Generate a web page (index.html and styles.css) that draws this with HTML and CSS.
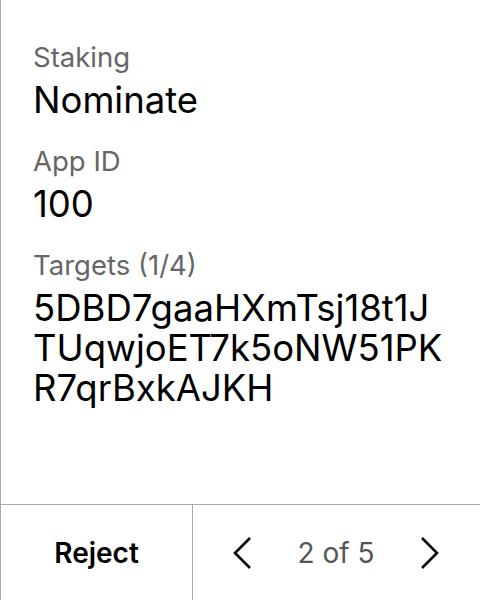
FILE: index.html
```html
<!DOCTYPE html>
<html>
<head>
<meta charset="utf-8">
<link rel="stylesheet" href="styles.css">
</head>
<body>
<div class="screen">
  <div class="content">
    <div class="field">
      <div class="label">Staking</div>
      <div class="value">Nominate</div>
    </div>
    <div class="field">
      <div class="label">App ID</div>
      <div class="value">100</div>
    </div>
    <div class="field">
      <div class="label">Targets (1/4)</div>
      <div class="value addr">5DBD7gaaHXmTsj18t1J<br>TUqwjoET7k5oNW51PK<br>R7qrBxkAJKH</div>
    </div>
  </div>
  <div class="footer">
    <div class="reject">Reject</div>
    <div class="pager">
      <svg class="chev" width="20" height="32" viewBox="0 0 20 32"><path d="M17 1 L2 16 L17 31" fill="none" stroke="#000" stroke-width="2.6"/></svg>
      <span class="count">2 of 5</span>
      <svg class="chev" width="20" height="32" viewBox="0 0 20 32"><path d="M3 1 L18 16 L3 31" fill="none" stroke="#000" stroke-width="2.6"/></svg>
    </div>
  </div>
</div>
</body>
</html>
```
FILE: styles.css
```css
html, body {
  margin: 0;
  padding: 0;
  background: #fff;
}
.screen {
  width: 480px;
  height: 600px;
  box-sizing: border-box;
  border-left: 1px solid #aaa;
  display: flex;
  flex-direction: column;
  font-family: Inter, "Noto Sans", sans-serif;
}
.content {
  flex: 1;
  padding: 40px 0 0 32px;
  display: flex;
  flex-direction: column;
  gap: 24px;
}
.label {
  font-size: 27.5px;
  line-height: 34px;
  color: #666;
  margin-bottom: 6px;
}
.value {
  font-size: 36.5px;
  line-height: 40px;
  color: #000;
}
.footer {
  height: 95px;
  border-top: 1px solid #aaa;
  display: flex;
}
.reject {
  width: 191px;
  border-right: 1px solid #aaa;
  display: flex;
  align-items: center;
  justify-content: center;
  font-weight: 600;
  font-size: 28px;
}
.pager {
  flex: 1;
  display: flex;
  align-items: center;
  justify-content: space-between;
  padding: 0 41px 0 40px;
}
.count {
  font-size: 28px;
  color: #555;
}
```
